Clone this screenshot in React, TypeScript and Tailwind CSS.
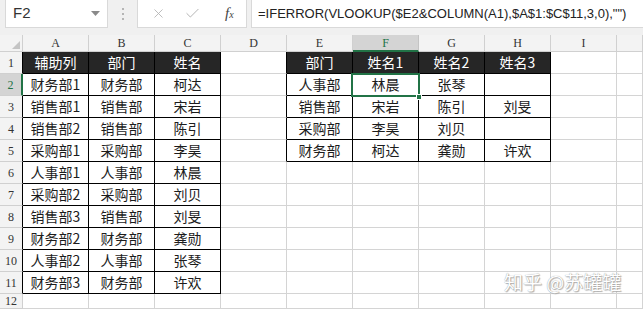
import { X, Check } from "lucide-react";

const COLS = ["A", "B", "C", "D", "E", "F", "G", "H", "I", "J"];

const left = [
  ["辅助列", "部门", "姓名"],
  ["财务部1", "财务部", "柯达"],
  ["销售部1", "销售部", "宋岩"],
  ["销售部2", "销售部", "陈引"],
  ["采购部1", "采购部", "李昊"],
  ["人事部1", "人事部", "林晨"],
  ["采购部2", "采购部", "刘贝"],
  ["销售部3", "销售部", "刘旻"],
  ["财务部2", "财务部", "龚勋"],
  ["人事部2", "人事部", "张琴"],
  ["财务部3", "财务部", "许欢"],
];

const right = [
  ["部门", "姓名1", "姓名2", "姓名3"],
  ["人事部", "林晨", "张琴", ""],
  ["销售部", "宋岩", "陈引", "刘旻"],
  ["采购部", "李昊", "刘贝", ""],
  ["财务部", "柯达", "龚勋", "许欢"],
];

const inTable = (r: number, c: number) =>
  (c >= 0 && c <= 2 && r >= 1 && r <= 11) || (c >= 4 && c <= 7 && r >= 1 && r <= 5);

const valueAt = (r: number, c: number) => {
  if (c <= 2 && r >= 1 && r <= 11) return left[r - 1][c];
  if (c >= 4 && c <= 7 && r >= 1 && r <= 5) return right[r - 1][c - 4];
  return "";
};

const cjk = "font-['Noto_Sans_CJK_SC','Noto_Sans',sans-serif]";
const serif = "font-['Liberation_Serif','DejaVu_Serif',serif]";

function Toolbar() {
  return (
    <div className="h-[35px] bg-[#f0f0f0] flex items-start">
      {/* name box */}
      <div className="ml-[5px] w-[103px] h-[28px] bg-white border-b border-x border-[#d9d9d9] flex items-center justify-between pl-[7px] pr-[7px]">
        <span className="font-['Liberation_Sans',Arial,sans-serif] text-[15px] text-[#333]">F2</span>
        <svg width="9" height="5" viewBox="0 0 9 5">
          <path d="M0 0 L9 0 L4.5 5 Z" fill="#8a8a8a" />
        </svg>
      </div>
      <div className="w-[29px] h-[28px] flex flex-col items-center justify-center gap-[3px]">
        <span className="w-[2px] h-[2px] bg-[#b5b5b5]" />
        <span className="w-[2px] h-[2px] bg-[#b5b5b5]" />
        <span className="w-[2px] h-[2px] bg-[#b5b5b5]" />
      </div>
      {/* cancel / enter / fx */}
      <div className="w-[110px] h-[28px] bg-white border-b border-x border-[#d9d9d9] flex items-center">
        <X size={15} strokeWidth={1.4} color="#b3b3b3" className="ml-[13px]" />
        <Check size={17} strokeWidth={1.4} color="#b3b3b3" className="ml-[18px]" />
        <span className={`${serif} italic text-[15px] text-[#444] ml-[24px] leading-none`}>
          f<span className="text-[10px]">x</span>
        </span>
      </div>
      <div className="ml-[4px] flex-1 h-[28px] bg-white border-b border-l border-[#d9d9d9] flex items-center pl-[6px]">
        <span className="font-['Liberation_Sans',Arial,sans-serif] text-[13px] text-[#222] whitespace-nowrap">
          =IFERROR(VLOOKUP($E2&amp;COLUMN(A1),$A$1:$C$11,3,0),"")
        </span>
      </div>
    </div>
  );
}

function HeaderRow() {
  return (
    <div className="flex h-[17px]">
      <div className="w-[23px] shrink-0 bg-[#f3f3f3] border-r border-b border-[#d0d0d0] relative">
        <svg className="absolute right-[2px] bottom-[2px]" width="8" height="8" viewBox="0 0 8 8">
          <path d="M8 0 L8 8 L0 8 Z" fill="#c4c4c4" />
        </svg>
      </div>
      {COLS.map((l, c) =>
        c === 5 ? (
          <div
            key={l}
            className={`w-[66px] shrink-0 bg-[#d4d4d4] border-r border-[#c4c4c4] border-b-2 border-b-[#217346] flex items-center justify-center ${serif} text-[12px] text-[#217346]`}
          >
            {l}
          </div>
        ) : (
          <div
            key={l}
            className={`${c === 9 ? "w-[26px]" : "w-[66px]"} shrink-0 bg-[#f3f3f3] border-r border-b border-[#d0d0d0] flex items-center justify-center ${serif} text-[12px] text-[#333]`}
          >
            {c === 9 ? "" : l}
          </div>
        )
      )}
    </div>
  );
}

function SheetRow({ r }: { r: number }) {
  const selectedRow = r === 2;
  const last = r === 12;
  return (
    <div className={`flex ${last ? "h-[15px]" : "h-[22px]"}`}>
      <div
        className={`w-[23px] shrink-0 border-b border-[#d0d0d0] flex justify-center ${
          last ? "items-center" : "items-end pb-[1px]"
        } ${serif} text-[12px] ${
          selectedRow
            ? "bg-[#d4d4d4] border-r-2 border-r-[#217346] text-[#217346]"
            : inTable(r, 0)
            ? "bg-[#f3f3f3] border-r border-r-black text-[#333]"
            : "bg-[#f3f3f3] border-r border-r-[#d0d0d0] text-[#333]"
        }`}
      >
        {r}
      </div>
      {COLS.map((l, c) => {
        const t = inTable(r, c);
        const head = t && r === 1;
        const rb = t || inTable(r, c + 1);
        const bb = t || inTable(r + 1, c);
        return (
          <div
            key={l}
            className={`${c === 9 ? "w-[26px]" : "w-[66px]"} shrink-0 border-r border-b ${
              rb ? "border-r-black" : "border-r-[#d4d4d4]"
            } ${bb ? "border-b-black" : "border-b-[#d4d4d4]"} ${
              head ? "bg-[#262626] text-white" : "bg-white text-[#1c1c1c]"
            } flex items-center justify-center ${cjk} text-[14px] whitespace-nowrap`}
          >
            {valueAt(r, c)}
          </div>
        );
      })}
    </div>
  );
}

export default function App() {
  const rows = Array.from({ length: 12 }, (_, i) => i + 1);
  return (
    <div className="w-[643px] h-[309px] overflow-hidden relative bg-white">
      <Toolbar />
      <HeaderRow />
      {rows.map((r) => (
        <SheetRow key={r} r={r} />
      ))}

      {/* active cell F2 */}
      <div className="absolute left-[351px] top-[73px] w-[69px] h-[24px] border-2 border-[#217346]" />
      <div className="absolute left-[416px] top-[94px] w-[6px] h-[6px] bg-[#217346] border border-white" />

      {/* watermark */}
      <div
        className={`absolute left-[504px] top-[268px] ${cjk} text-[19px] text-white whitespace-nowrap [text-shadow:0_0_1px_#8a8a8a,1px_1px_1px_#b0b0b0]`}
      >
        知乎 @苏罐罐
      </div>
    </div>
  );
}
